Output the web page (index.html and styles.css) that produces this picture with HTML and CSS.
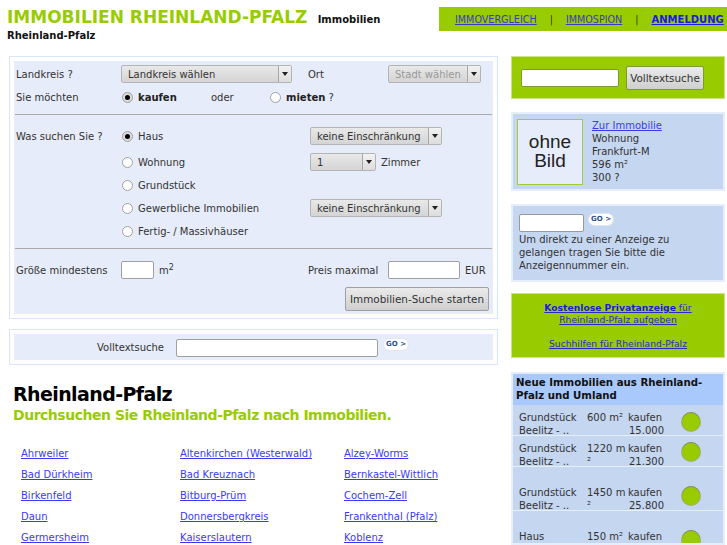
FILE: index.html
```html
<!DOCTYPE html>
<html lang="de">
<head>
<meta charset="utf-8">
<title>Immobilien Rheinland-Pfalz</title>
<link rel="stylesheet" href="styles.css">
</head>
<body>
<header class="top">
  <div class="brand"><span class="brand-title">IMMOBILIEN RHEINLAND-PFALZ</span> <span class="brand-sub">Immobilien Rheinland-Pfalz</span></div>
  <nav class="nav"><a href="#">IMMOVERGLEICH</a><span>|</span><a href="#">IMMOSPION</a><span>|</span><a href="#" class="nav-strong">ANMELDUNG</a></nav>
</header>
<div class="layout">
  <main class="main">
    <section class="panel">
      <div class="panel-inner search">
        <div class="row row-a">
          <span class="c-label">Landkreis ?</span>
          <span class="select s-kreis">Landkreis wählen<i class="arrow"></i></span>
          <span class="c-ort">Ort</span>
          <span class="select s-stadt disabled">Stadt wählen<i class="arrow"></i></span>
        </div>
        <div class="row row-b">
          <span class="c-label">Sie möchten</span>
          <span class="radio on"></span><b class="kauf">kaufen</b><span class="oder">oder</span>
          <span class="radio"></span><span class="miet"><b>mieten</b> ?</span>
        </div>
        <hr class="rule rule-1">
        <div class="row r-haus"><span class="c-label">Was suchen Sie ?</span><span class="radio on"></span><span class="opt">Haus</span><span class="select s-keine">keine Einschränkung<i class="arrow"></i></span></div>
        <div class="row r-wohn"><span class="c-label"></span><span class="radio"></span><span class="opt">Wohnung</span><span class="select s-zimmer">1<i class="arrow"></i></span><span class="zimmer">Zimmer</span></div>
        <div class="row r-grund"><span class="c-label"></span><span class="radio"></span><span class="opt">Grundstück</span></div>
        <div class="row r-gew"><span class="c-label"></span><span class="radio"></span><span class="opt">Gewerbliche Immobilien</span><span class="select s-keine">keine Einschränkung<i class="arrow"></i></span></div>
        <div class="row r-fert"><span class="c-label"></span><span class="radio"></span><span class="opt">Fertig- / Massivhäuser</span></div>
        <hr class="rule rule-2">
        <div class="row r-size">
          <span class="c-label">Größe mindestens</span>
          <span class="input i-size"></span><span class="unit">m<sup>2</sup></span>
          <span class="preis">Preis maximal</span>
          <span class="input i-preis"></span><span class="eur">EUR</span>
        </div>
        <div class="submit-row"><button class="btn btn-start" type="button">Immobilien-Suche starten</button></div>
      </div>
    </section>
    <section class="panel panel-text">
      <div class="panel-inner fulltext">
        <span class="ft-label">Volltextsuche</span>
        <span class="input i-text"></span>
        <span class="go">GO &gt;</span>
      </div>
    </section>
    <h1 class="region">Rheinland-Pfalz</h1>
    <h2 class="region-sub">Durchsuchen Sie Rheinland-Pfalz nach Immobilien.</h2>
    <ul class="links">
      <li><a href="#">Ahrweiler</a></li><li><a href="#">Altenkirchen (Westerwald)</a></li><li><a href="#">Alzey-Worms</a></li>
      <li><a href="#">Bad Dürkheim</a></li><li><a href="#">Bad Kreuznach</a></li><li><a href="#">Bernkastel-Wittlich</a></li>
      <li><a href="#">Birkenfeld</a></li><li><a href="#">Bitburg-Prüm</a></li><li><a href="#">Cochem-Zell</a></li>
      <li><a href="#">Daun</a></li><li><a href="#">Donnersbergkreis</a></li><li><a href="#">Frankenthal (Pfalz)</a></li>
      <li><a href="#">Germersheim</a></li><li><a href="#">Kaiserslautern</a></li><li><a href="#">Koblenz</a></li>
    </ul>
  </main>
  <aside class="side">
    <div class="box box-green box-search">
      <span class="input i-side"></span>
      <button class="btn btn-side" type="button">Volltextsuche</button>
    </div>
    <div class="box box-blue box-immo">
      <div class="nophoto">ohne<br>Bild</div>
      <div class="immo-text"><a href="#">Zur Immobilie</a><br>Wohnung<br>Frankfurt-M<br>596 m²<br>300 ?</div>
    </div>
    <div class="box box-blue box-num">
      <div class="num-top"><span class="input i-num"></span><span class="go">GO &gt;</span></div>
      <p class="num-text">Um direkt zu einer Anzeige zu gelangen tragen Sie bitte die Anzeigennummer ein.</p>
    </div>
    <div class="box box-green box-links">
      <a href="#"><b>Kostenlose Privatanzeige</b> für<br>Rheinland-Pfalz aufgeben</a>
      <a href="#" class="help">Suchhilfen für Rheinland-Pfalz</a>
    </div>
    <div class="box box-list">
      <h3 class="list-head">Neue Immobilien aus Rheinland-Pfalz und Umland</h3>
      <div class="item item-1"><span class="it-name">Grundstück<br>Beelitz - ..</span><span class="it-size">600 m²</span><span class="it-price">kaufen<br><span class="num">15.000</span></span><i class="dot"></i></div>
      <div class="item item-2"><span class="it-name">Grundstück<br>Beelitz - ..</span><span class="it-size">1220 m<br>²</span><span class="it-price">kaufen<br><span class="num">21.300</span></span><i class="dot"></i></div>
      <div class="item item-3"><span class="it-name">Grundstück<br>Beelitz - ..</span><span class="it-size">1450 m<br>²</span><span class="it-price">kaufen<br><span class="num">25.800</span></span><i class="dot"></i></div>
      <div class="item item-4"><span class="it-name">Haus</span><span class="it-size">150 m²</span><span class="it-price">kaufen</span><i class="dot"></i></div>
    </div>
  </aside>
</div>
</body>
</html>
```
FILE: styles.css
```css
html, body { margin: 0; padding: 0; height: 545px; overflow: hidden; background: #fff; }
body { font: 10px/13px "DejaVu Sans", sans-serif; color: #333; }
a { color: #3a3af5; }
* { box-sizing: border-box; }

.top { display: flex; height: 56px; }
.brand { width: 439px; padding: 7px 0 0 7px; color: #000; line-height: 16px; }
.brand-title { font-size: 17px; font-weight: bold; color: #99cc00; line-height: 20px; margin-right: 7px; }
.brand-sub { font-weight: bold; font-size: 10px; color: #111; }
.nav { width: 288px; height: 24px; margin-top: 7px; background: #99cc00; display: flex; align-items: center; padding-left: 16px; gap: 13px; color: #333; white-space: nowrap; font-size: 9.6px; }
.nav-strong { font-weight: bold; color: #1a1ae0; font-size: 10px; }
.nav a:not(.nav-strong) { color: #3a3ac0; }

.layout { display: flex; padding-left: 9px; gap: 13px; align-items: flex-start; }
.main { width: 489px; flex: none; height: 489px; overflow: hidden; }
.side { width: 214px; flex: none; }

.panel { border: 1px solid #d8e5fa; padding: 4px; background: #fff; }
.panel-inner { background: #e6ecf9; }
.search { height: 253px; padding: 4px 1px 0; }
.panel-text { margin-top: 10px; }

.row { display: flex; align-items: center; padding-left: 1px; white-space: nowrap; }
.c-label { width: 105px; flex: none; color: #333; }
.row-a { height: 18px; }
.row-b { margin-top: 5px; height: 18px; }
.rule { border: 0; height: 1px; background: #aaa; margin: 0; }
.rule-1 { margin-top: 8px; }
.r-haus { height: 18px; margin-top: 12px; }
.r-wohn { height: 18px; margin-top: 8px; }
.r-grund { height: 18px; margin-top: 5px; }
.r-gew { height: 18px; margin-top: 5px; }
.r-fert { height: 18px; margin-top: 5px; }
.rule-2 { margin-top: 8px; }
.r-size { height: 18px; margin-top: 12px; }
.submit-row { display: flex; justify-content: flex-end; margin-top: 8px; padding-right: 3px; }

.select { display: inline-block; position: relative; height: 18px; line-height: 17px; padding-left: 6px; border: 1px solid #b4b4b4; border-radius: 2px; background: linear-gradient(#e9e9e9, #d4d4d4); color: #333; }
.arrow { position: absolute; right: 0; top: 0; width: 13px; height: 16px; border-left: 1px solid #a8a8a8; background: linear-gradient(#f2f2f2, #dcdcdc); }
.arrow::after { content: ""; position: absolute; left: 3px; top: 6px; border: 3px solid transparent; border-top: 4px solid #222; border-bottom: 0; }
.disabled { color: #999; }
.s-kreis { width: 171px; }
.c-ort { margin-left: 16px; width: 80px; }
.s-stadt { width: 93px; }
.s-keine { width: 132px; position: absolute; left: 310px; }
.s-zimmer { width: 66px; position: absolute; left: 310px; }
.zimmer { position: absolute; left: 381px; }

.radio { width: 11px; height: 11px; border-radius: 50%; border: 1px solid #a0a0a0; background: #fff; flex: none; margin-right: 5px; margin-left: 1px; position: relative; }
.radio.on { background: #dcdcdc; }
.radio.on::after { content: ""; position: absolute; left: 2px; top: 2px; width: 5px; height: 5px; border-radius: 50%; background: #000; }
.kauf { color: #222; width: 73px; }
.oder { width: 58px; }
.miet b { color: #222; }

.input { display: inline-block; height: 18px; background: #fff; border: 1px solid #a0a0a0; border-radius: 2px; }
.i-size { width: 33px; flex: none; }
.unit { margin-left: 5px; width: 149px; }
.unit sup { font-size: 8px; line-height: 0; }
.preis { width: 80px; }
.i-preis { width: 72px; flex: none; }
.eur { margin-left: 5px; }

.btn { font: 10.4px "DejaVu Sans", sans-serif; color: #333; border: 1px solid #a0a0a0; border-radius: 2px; background: linear-gradient(#ebebeb, #cfcfcf); padding: 0; }
.btn-start { width: 144px; height: 24px; }

.fulltext { height: 26px; display: flex; align-items: center; position: relative; }
.ft-label { margin-left: 83px; width: 79px; }
.i-text { width: 202px; margin-top: 1px; }
.go { display: inline-block; width: 26px; height: 13px; margin-left: 5px; border: 1px solid #dfe6f2; border-radius: 7px; background: #fff; color: #2c4f8c; font-size: 7px; font-weight: bold; line-height: 11px; text-align: center; white-space: nowrap; }
.fulltext .go { margin-bottom: 5px; margin-left: 5px; }

.region { font-size: 19px; line-height: 24px; margin: 17px 0 0 4px; color: #000; font-weight: bold; letter-spacing: -0.6px; }
.region-sub { font-size: 14px; line-height: 18px; margin: 0 0 0 4px; color: #99cc00; font-weight: bold; letter-spacing: -0.48px; }
.links { list-style: none; margin: 19px 0 0; padding: 0; display: grid; grid-template-columns: 159px 164px auto; grid-auto-rows: 21px; padding-left: 12px; }
.links li { line-height: 21px; }

.box { width: 214px; border: 1px solid #e3ecfa; }
.box-green { background: #99cc00; border: 1px solid #cde480; }
.box-blue { background: #c5d6f0; border: 2px solid #e6eefb; }
.box-search { height: 43px; display: flex; align-items: center; padding-left: 9px; gap: 7px; }
.i-side { width: 98px; border-color: #7f9a30; }
.btn-side { width: 78px; height: 24px; border-color: #7f9a30; }
.box-immo { height: 79px; margin-top: 13px; display: flex; padding: 5px 4px; gap: 9px; }
.nophoto { width: 66px; height: 66px; border: 1px solid #a6cc33; background: #e6ecf9; font: 19px/19px "Liberation Sans", "DejaVu Sans", sans-serif; color: #222; text-align: center; padding-top: 12px; flex: none; }
.immo-text { color: #333; }
.box-num { height: 78px; margin-top: 13px; padding: 8px 7px 0 6px; }
.num-top { display: flex; height: 19px; }
.i-num { width: 65px; border-color: #999; }
.num-top .go { margin-left: 4px; margin-top: -1px; }
.num-text { margin: 0; }
.box-links { height: 65px; margin-top: 11px; text-align: center; padding-top: 8px; line-height: 12px; font-size: 9.2px; }
.box-links a { display: block; color: #2a2ac8; }
.box-links b { color: #1a1ae0; }
.box-links .help { margin-top: 12px; }
.box-list { margin-top: 14px; border: 2px solid #e6eefb; background: #c5d6f0; height: 173px; overflow: hidden; }
.list-head { margin: 0; background: #a9c8fb; color: #111; font-size: 10.2px; line-height: 13px; height: 31px; padding: 2px 3px 0 3px; font-weight: bold; }
.item { display: flex; border-bottom: 1px solid #e6eefb; padding-left: 6px; position: relative; color: #333; }
.it-name { width: 68px; flex: none; }
.it-size { width: 41px; flex: none; white-space: nowrap; }
.it-price { width: 36px; flex: none; }
.num { display: block; text-align: right; }
.dot { position: absolute; left: 169px; width: 18px; height: 18px; border-radius: 50%; background: #99cc00; box-shadow: 0 -1px 0 0 #8a8a70, 0 0 0 1px #9fb070; }
.item-1 { height: 31px; padding-top: 6px; }
.item-1 .dot { top: 8px; }
.item-2 { height: 31px; padding-top: 6px; }
.item-2 .dot { top: 7px; }
.item-3 { height: 44px; padding-top: 19px; }
.item-3 .dot { top: 20px; }
.item-4 { height: 44px; padding-top: 19px; }
.item-4 .dot { top: 20px; }
```
